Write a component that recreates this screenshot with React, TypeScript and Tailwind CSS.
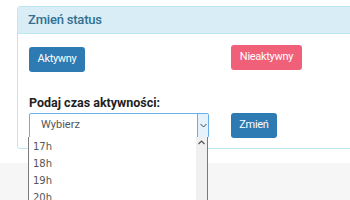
import React from "react";

export default function App() {
  const hours = ["17h", "18h", "19h", "20h", "21h"];
  return (
    <div className="w-[350px] h-[200px] overflow-hidden bg-white relative" style={{ fontFamily: "Roboto, 'Liberation Sans', sans-serif" }}>
      <div className="pt-[6px] pl-[17px] h-[163px] bg-white">
        <div className="w-[360px] border border-[#bce8f1] rounded-tl-[3px] rounded-bl-[3px]">
          <div className="h-[27px] bg-[#d9edf7] border-b border-[#bce8f1] pl-[10px] flex items-center text-[13px] font-medium tracking-[-0.2px] text-[#31708f]">
            Zmień status
          </div>
          <div className="pl-[11px] pt-[11px] pb-[10px]">
            <div className="flex">
              <div className="w-[202px]">
                <button className="h-[25px] w-[56px] rounded-[3px] bg-[#2e7ab2] text-white text-[11px] tracking-[-0.3px]">Aktywny</button>
              </div>
              <button className="h-[25px] w-[71px] rounded-[3px] bg-[#f06079] text-white text-[11px] tracking-[-0.3px]">Nieaktywny</button>
            </div>
            <div className="mt-[23px] text-[12.5px] font-bold text-[#222] leading-[15px]">Podaj czas aktywności:</div>
            <div className="flex mt-[3px]">
              <div className="w-[202px] relative">
                <div className="w-[180px] h-[25px] border border-[#66afe9] rounded-[2px] flex items-center bg-white">
                  <span className="pl-[11px] flex-1 text-[11px] text-[#555]">Wybierz</span>
                  <div className="w-[11px] h-full bg-[#e5f1fb] border-l border-[#66afe9] flex items-center justify-center">
                    <svg width="7" height="5" viewBox="0 0 7 5"><path d="M0.5 1 L3.5 4 L6.5 1" fill="none" stroke="#444" strokeWidth="1" /></svg>
                  </div>
                </div>
              </div>
              <button className="h-[25px] w-[46px] rounded-[3px] bg-[#2e7ab2] text-white text-[11px] tracking-[-0.3px]">Zmień</button>
            </div>
          </div>
        </div>
      </div>
      <div className="h-[37px] bg-[#f6f6f6]" />
      <div className="absolute left-[28px] top-[137px] w-[180px] h-[70px] bg-white border-l border-r border-[#7a7a7a] flex" style={{ fontFamily: "'DejaVu Sans', sans-serif" }}>
        <div className="flex-1 flex flex-col pt-[1px]">
          {hours.map((h) => (
            <div key={h} className="h-[17px] pl-[4px] text-[10px] text-[#555] leading-[17px]">{h}</div>
          ))}
        </div>
        <div className="w-[11px] bg-[#f0f0f0] flex justify-center pt-[3px]">
          <svg width="7" height="5" viewBox="0 0 7 5"><path d="M0.5 4 L3.5 1 L6.5 4" fill="none" stroke="#555" strokeWidth="1.2" /></svg>
        </div>
      </div>
    </div>
  );
}
